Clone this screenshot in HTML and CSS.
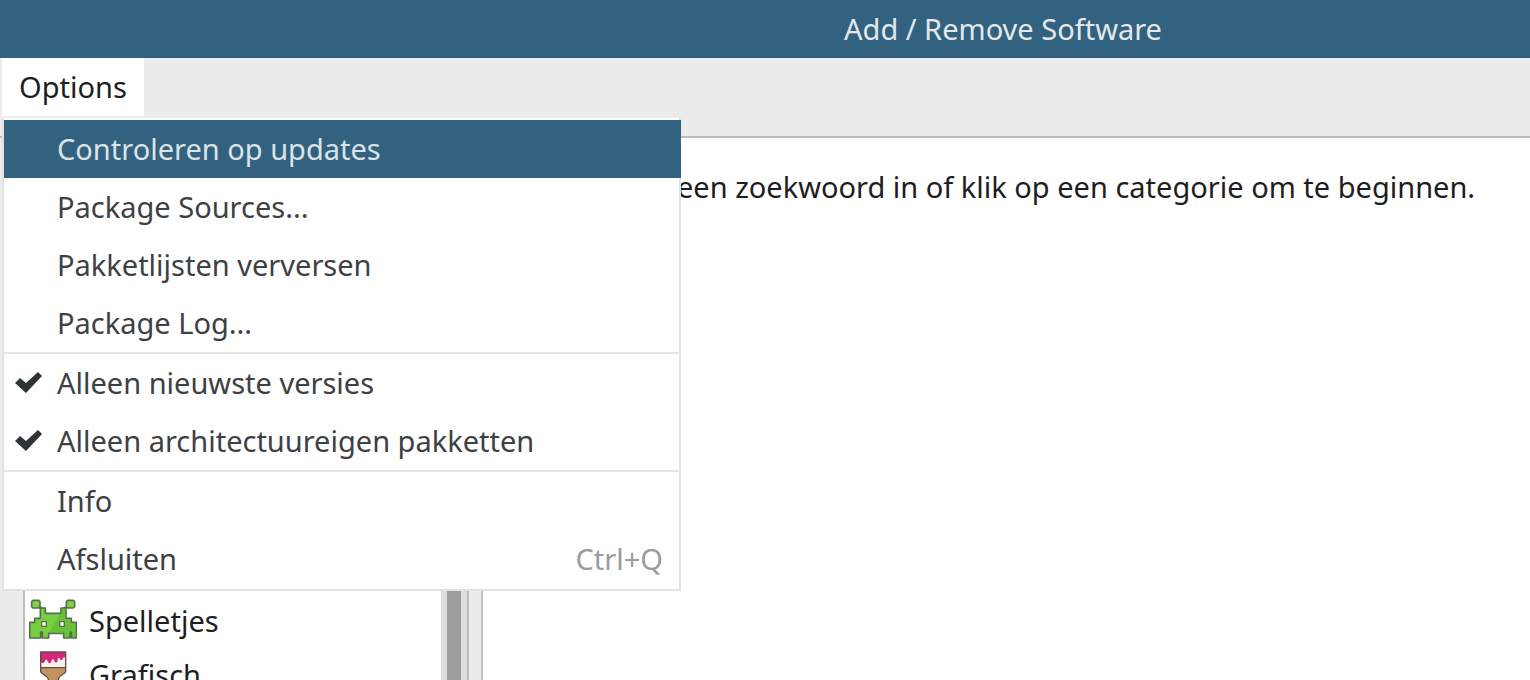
FILE: index.html
```
<!DOCTYPE html>
<html lang="nl">
<head>
<meta charset="utf-8">
<title>Add / Remove Software</title>
<link rel="stylesheet" href="styles.css">
</head>
<body>
<div class="window">
  <header class="titlebar"><h1 class="title">Add / Remove Software</h1></header>
  <nav class="menubar">
    <button class="menubar-item" type="button" aria-haspopup="true" aria-expanded="true">Options</button>
    <div class="menu">
      <button class="menu-item selected" type="button">Controleren op updates</button>
      <button class="menu-item" type="button">Package Sources...</button>
      <button class="menu-item" type="button">Pakketlijsten verversen</button>
      <button class="menu-item" type="button">Package Log...</button>
      <hr class="separator">
      <label class="menu-item" for="newest">
        <input class="check" type="checkbox" id="newest" checked>
        <svg class="tick" viewBox="0 0 28 22" aria-hidden="true"><path d="M0 11l5-5 6 5L23 0l4 4L11 21z"/></svg>
        Alleen nieuwste versies
      </label>
      <label class="menu-item" for="native">
        <input class="check" type="checkbox" id="native" checked>
        <svg class="tick" viewBox="0 0 28 22" aria-hidden="true"><path d="M0 11l5-5 6 5L23 0l4 4L11 21z"/></svg>
        Alleen architectuureigen pakketten
      </label>
      <hr class="separator">
      <button class="menu-item" type="button">Info</button>
      <button class="menu-item" type="button">Afsluiten<span class="shortcut">Ctrl+Q</span></button>
    </div>
  </nav>
  <div class="content">
    <aside class="sidebar">
      <div class="categories">
        <ul class="list">
          <li class="category">
            <svg class="icon" viewBox="87 54 144 144" aria-hidden="true">
              <g stroke="#56704a" stroke-width="5" stroke-linejoin="round">
                <path fill="none" d="M117 86h10M201 86h-10"/>
                <path fill="#7ed348" d="M99 64h17l4 4v15l-4 4H99l-4-4V68zM203 64h17l4 4v15l-4 4h-17l-4-4V68z"/>
                <path fill="#76cf40" d="M121 87h15v16h47V87h15v31h16v12h15v47h-14v-18h-5v18h-19v-14h-45v14h-19v-18h-5v18H89v-47h15v-12h17z"/>
              </g>
              <path fill="#65b936" d="M181 105h4V90h11v30h16v12h15v43h-10v-18h-9v18h-12l-2-14h-48z" opacity=".65"/>
              <path fill="#fff" stroke="#56704a" stroke-width="4" d="M125 128h14v14h-14zM179 128h14v14h-14z"/>
            </svg>
            <span>Spelletjes</span>
          </li>
          <li class="category">
            <svg class="icon" viewBox="87 216 144 144" aria-hidden="true">
              <path fill="#f7f0ec" d="M122 219h75v47h-75z"/>
              <path fill="#d4267c" d="M122 219h75v18c-5-3-9-1-9 3-2 5-8 5-9-2-4-3-7 0-6 7-1 7-9 7-10 0-1-6-8-6-9 2-1 8-9 8-11 0-3-7-6-7-9 1-3 6-12 5-12-2z"/>
              <path fill="#c2935f" d="M122 266h75v12c-3 9-19 9-22 22v50h-30v-50c-3-13-20-13-23-22z"/>
              <path fill="none" stroke="#5f5149" stroke-width="4" stroke-linejoin="round" d="M122 219h75v59c-3 9-19 9-22 22v50h-30v-50c-3-13-20-13-23-22zM122 266h75"/>
            </svg>
            <span>Grafisch</span>
          </li>
        </ul>
        <div class="scrollbar"><div class="thumb"></div></div>
      </div>
    </aside>
    <main class="results"><p class="message">een zoekwoord in of klik op een categorie om te beginnen.</p></main>
  </div>
</div>
</body>
</html>
```
FILE: styles.css
```
* { box-sizing: border-box; }

body {
  margin: 0;
  background: #ececec;
  color: #1e1e1e;
  font: 29px/40px "Noto Sans", sans-serif;
}

button { font: inherit; color: inherit; border: 0; }

.window {
  display: flex;
  flex-direction: column;
  height: 100vh;
  overflow: hidden;
}

.titlebar {
  flex: none;
  padding: 9px 0 9px 476px;
  background: #32627f;
  color: #e2e8ec;
  text-align: center;
}

.title { margin: 0; font-size: 29px; font-weight: 400; }

.menubar {
  position: relative;
  flex: none;
  padding: 0 0 20px 2px;
  border-bottom: 2px solid #bdbdbd;
}

.menubar-item {
  display: block;
  padding: 9px 17px;
  background: #fff;
}

.menu {
  position: absolute;
  z-index: 1;
  top: 60px;
  left: 2px;
  width: 679px;
  padding: 2px 0 1px;
  background: #fefefe;
  border: solid #e2e2e2;
  border-width: 0 2px 2px;
}

.menu-item {
  position: relative;
  display: flex;
  width: 100%;
  padding: 9px 16px 9px 53px;
  background: none;
  color: #3d4144;
  text-align: left;
}

.selected {
  width: auto;
  min-width: calc(100% + 2px);
  background: #32627f;
  color: #dbe3e8;
}

.shortcut { margin-left: auto; color: #9a9c9d; }

.separator { height: 2px; margin: 0; border: 0; background: #e6e6e6; }

.check { position: absolute; inset: 0; margin: 0; appearance: none; }

.tick {
  position: absolute;
  top: 18px;
  left: 11px;
  width: 28px;
  fill: #2e3436;
  visibility: hidden;
}

.check:checked + .tick { visibility: visible; }

.content { display: flex; flex: 1; min-height: 0; }

.sidebar {
  flex: none;
  width: 483px;
  padding: 0 12px 0 23px;
  border-right: 2px solid #bdbdbd;
}

.categories {
  display: flex;
  height: 100%;
  border: solid #bdbdbd;
  border-width: 0 2px;
  background: #fff;
  overflow: hidden;
}

.list { flex: 1; margin: 0; padding: 456px 0 0 4px; list-style: none; }

.category { display: flex; align-items: center; gap: 12px; height: 54px; }

.icon { width: 48px; height: 48px; }

.scrollbar { width: 26px; padding: 0 6px; background: #dedede; }

.thumb { height: 100%; background: #9e9e9e; }

.results { flex: 1; background: #fff; }

.message { margin: 0; padding: 29px 0 0 194px; white-space: nowrap; }
```
